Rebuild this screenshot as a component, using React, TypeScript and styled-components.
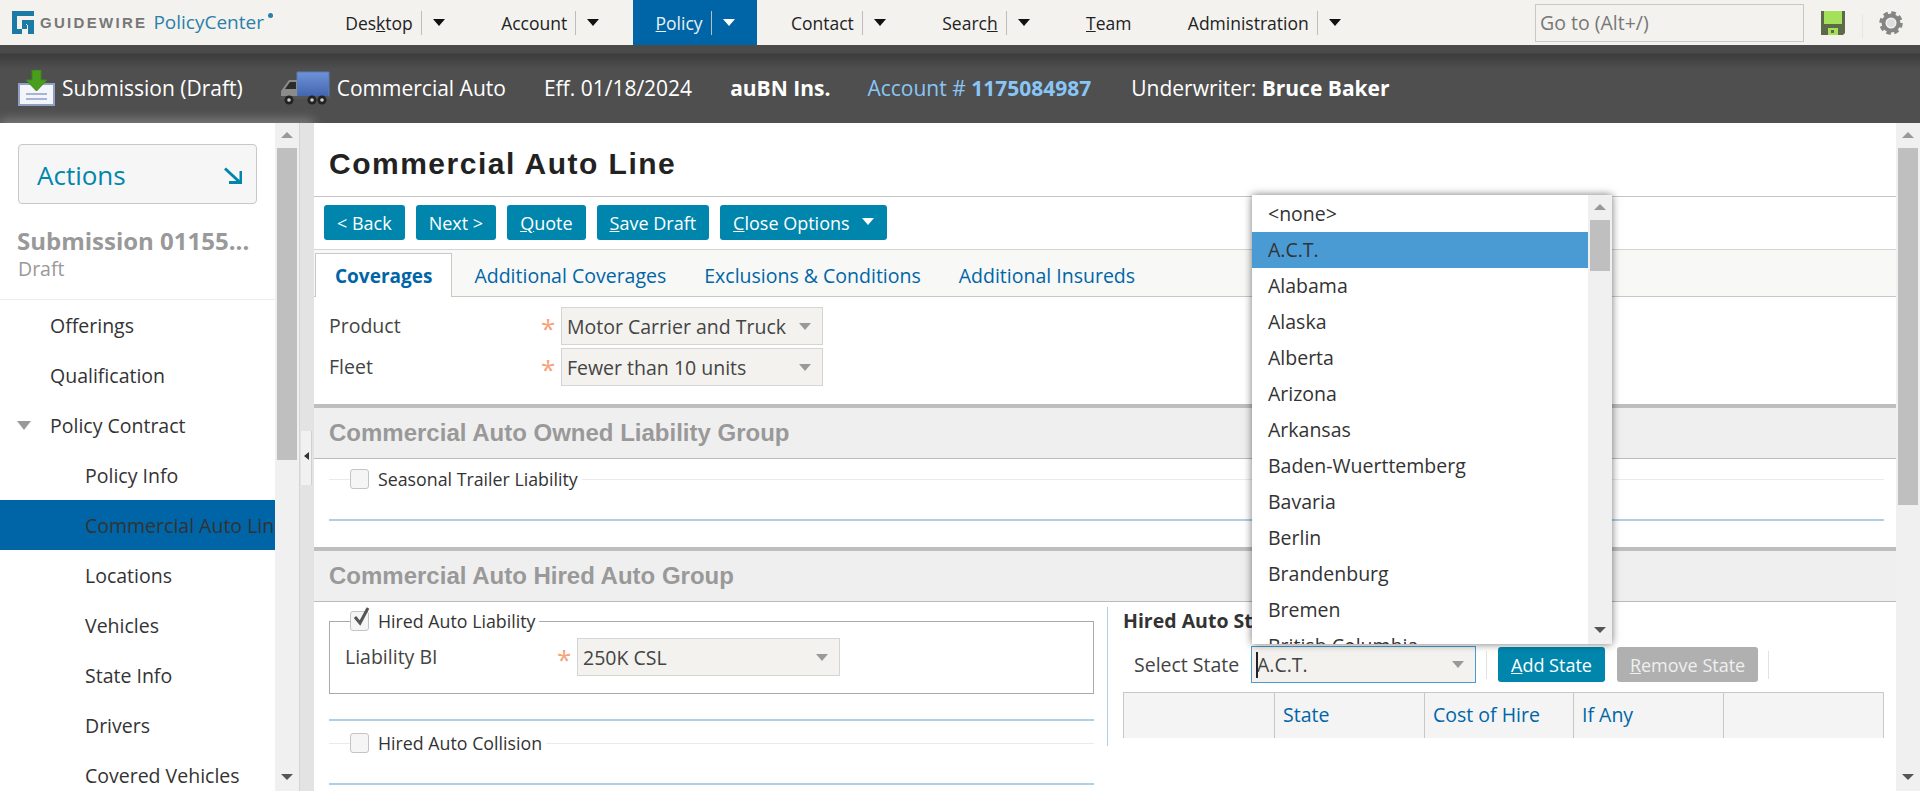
import styled, { createGlobalStyle } from 'styled-components';

const GlobalStyle = createGlobalStyle`
  html, body {
    margin: 0;
    height: 100%;
    overflow: hidden;
    background: #fff;
  }
  body {
    font-family: 'Open Sans', sans-serif;
    color: #333;
  }
  * {
    box-sizing: border-box;
  }
`;

const navItems = [
  { id: 'desktop', label: <>Des<u>k</u>top</>, menu: true },
  { id: 'account', label: <>Account</>, menu: true },
  { id: 'policy', label: <><u>P</u>olicy</>, menu: true, active: true },
  { id: 'contact', label: <>Contact</>, menu: true },
  { id: 'search', label: <>Searc<u>h</u></>, menu: true },
  { id: 'team', label: <><u>T</u>eam</>, menu: false },
  { id: 'admin', label: <>Administration</>, menu: true },
];

const sideItems = [
  { label: 'Offerings', level: 1 },
  { label: 'Qualification', level: 1 },
  { label: 'Policy Contract', level: 1, open: true },
  { label: 'Policy Info', level: 2 },
  { label: 'Commercial Auto Line', level: 2, active: true },
  { label: 'Locations', level: 2 },
  { label: 'Vehicles', level: 2 },
  { label: 'State Info', level: 2 },
  { label: 'Drivers', level: 2 },
  { label: 'Covered Vehicles', level: 2 },
];

const states = [
  '<none>',
  'A.C.T.',
  'Alabama',
  'Alaska',
  'Alberta',
  'Arizona',
  'Arkansas',
  'Baden-Wuerttemberg',
  'Bavaria',
  'Berlin',
  'Brandenburg',
  'Bremen',
  'British Columbia',
];

const Logo = () => (
  <LogoWrap>
    <svg width="22" height="23" viewBox="0 0 22 23">
      <path
        fill="#1b7ba5"
        d="M0 0h22v5H5v13h5V9h12v14h-6v-9h-1v4h-5v5H0zM15 14v-1h-1v1z"
      />
    </svg>
    <LogoWord>GUIDEWIRE</LogoWord>
    <LogoProduct>PolicyCenter</LogoProduct>
    <LogoDot />
  </LogoWrap>
);

const SubmissionIcon = () => (
  <svg width="37" height="36" viewBox="0 0 37 36">
    <path fill="#f3f5fa" stroke="#8f9fc6" strokeWidth="2" d="M1 14h35v21H1z" />
    <path stroke="#8f9fc6" strokeWidth="1.5" d="M8 24h21M8 29h21" />
    <path fill="#4a9d1e" stroke="#3b8a14" d="M14 0h9v10h6L18.500 21 8 10h6z" />
  </svg>
);

const TruckIcon = () => (
  <svg width="50" height="34" viewBox="0 0 50 34">
    <defs>
      <linearGradient id="box" x1="0" y1="0" x2="0" y2="1">
        <stop offset="0" stopColor="#6f93d8" />
        <stop offset="1" stopColor="#3f62ad" />
      </linearGradient>
    </defs>
    <path fill="url(#box)" stroke="#5a7ab8" d="M17 1h32v26H17z" />
    <path fill="#8b8b8b" d="M17 9H9L1 20v7h16z" />
    <path fill="#2b2b2b" d="M10 11h6v7H5z" />
    <path fill="#555" d="M1 25h48v3H1z" />
    <circle cx="9" cy="29" r="4.500" fill="#222" />
    <circle cx="9" cy="29" r="1.800" fill="#ccc" />
    <circle cx="32" cy="29" r="4.500" fill="#222" />
    <circle cx="32" cy="29" r="1.800" fill="#ccc" />
    <circle cx="42" cy="29" r="4.500" fill="#222" />
    <circle cx="42" cy="29" r="1.800" fill="#ccc" />
  </svg>
);

const SaveIcon = () => (
  <svg width="24" height="24" viewBox="0 0 24 24">
    <path fill="#5c6a4a" d="M0 0h24v22l-2 2H0z" />
    <path fill="#a4e05a" d="M3 0h18v13H3z" />
    <path fill="#a4e05a" d="M7 17h10v7H7z" />
    <path fill="#5c6a4a" d="M10 19h3v3h-3z" />
  </svg>
);

const GearIcon = () => (
  <svg width="24" height="24" viewBox="0 0 24 24">
    <circle cx="12" cy="12" r="7.500" fill="none" stroke="#858585" strokeWidth="4" />
    <circle cx="12" cy="12" r="10" fill="none" stroke="#858585" strokeWidth="3.500" strokeDasharray="4.500 3.350" />
    <circle cx="12" cy="12" r="4" fill="#dedede" />
  </svg>
);

const ActionsArrow = () => (
  <svg width="18" height="17" viewBox="0 0 18 17">
    <path fill="none" stroke="#0086ad" strokeWidth="3" d="M1 1.500l14 13M17 4v11.500H5" />
  </svg>
);

const CheckIcon = () => (
  <CheckMark width="20" height="22" viewBox="0 0 20 22">
    <path fill="none" stroke="#555" strokeWidth="3" d="M4 11l5 6L17 2" />
  </CheckMark>
);

const Dropdown = ({ value, width }: { value: string; width: number }) => (
  <SelectBox $width={width}>
    <span>{value}</span>
    <SelectCaret />
  </SelectBox>
);

const Scrollbar = ({ thumbTop, thumbHeight }: { thumbTop: number; thumbHeight: number }) => (
  <ScrollTrack>
    <ArrowUp />
    <ScrollThumb $top={thumbTop} $height={thumbHeight} />
    <ArrowDown />
  </ScrollTrack>
);

const App = () => {
  return (
    <Page>
      <GlobalStyle />
      <TopBar>
        <Logo />
        <Nav>
          {navItems.map((item) => (
            <NavItem key={item.id} $active={item.active}>
              <span>{item.label}</span>
              {item.menu && (
                <>
                  <NavSep />
                  <NavCaret $active={item.active} />
                </>
              )}
            </NavItem>
          ))}
        </Nav>
        <GoTo>Go to (Alt+/)</GoTo>
        <SaveSlot>
          <SaveIcon />
        </SaveSlot>
        <GearSlot>
          <GearIcon />
        </GearSlot>
      </TopBar>

      <InfoBar>
        <InfoIcon $left={18} $gap={7}>
          <SubmissionIcon />
          <span>Submission (Draft)</span>
        </InfoIcon>
        <InfoIcon $left={37} $gap={7}>
          <TruckIcon />
          <span>Commercial Auto</span>
        </InfoIcon>
        <InfoText $left={38}>Eff. 01/18/2024</InfoText>
        <InfoText $left={38}>
          <b>auBN Ins.</b>
        </InfoText>
        <InfoText $left={37} $blue>
          Account # <b>1175084987</b>
        </InfoText>
        <InfoText $left={40}>
          Underwriter: <b>Bruce Baker</b>
        </InfoText>
      </InfoBar>

      <Body>
        <Sidebar>
          <SideContent>
            <ActionsButton>
              <span>Actions</span>
              <ActionsArrow />
            </ActionsButton>
            <SideTitle>Submission 01155...</SideTitle>
            <SideStatus>Draft</SideStatus>
            <SideList>
              {sideItems.map((item) => (
                <SideItem key={item.label} $level={item.level} $active={item.active}>
                  {item.open && <SideCaret />}
                  {item.label}
                </SideItem>
              ))}
            </SideList>
          </SideContent>
          <Scrollbar thumbTop={3} thumbHeight={312} />
          <Splitter>
            <SplitHandle />
          </Splitter>
        </Sidebar>

        <Main>
          <Title>Commercial Auto Line</Title>
          <Toolbar>
            <Button>&lt; Back</Button>
            <Button>Next &gt;</Button>
            <Button>
              <u>Q</u>uote
            </Button>
            <Button>
              <u>S</u>ave Draft
            </Button>
            <Button>
              <u>C</u>lose Options
              <ButtonCaret />
            </Button>
          </Toolbar>
          <Tabs>
            <Tab $active>Coverages</Tab>
            <Tab>Additional Coverages</Tab>
            <Tab>Exclusions &amp; Conditions</Tab>
            <Tab>Additional Insureds</Tab>
          </Tabs>

          <TopForm>
            <FormRow>
              <FieldLabel $width={212}>Product</FieldLabel>
              <Required />
              <Dropdown value="Motor Carrier and Truck" width={262} />
            </FormRow>
            <FormRow>
              <FieldLabel $width={212}>Fleet</FieldLabel>
              <Required />
              <Dropdown value="Fewer than 10 units" width={262} />
            </FormRow>
          </TopForm>

          <SectionHeader>Commercial Auto Owned Liability Group</SectionHeader>
          <SectionBody>
            <OpenGroup>
              <GroupLegend>
                <Checkbox />
                Seasonal Trailer Liability
              </GroupLegend>
            </OpenGroup>
            <BlueRule />
          </SectionBody>

          <SectionHeader>Commercial Auto Hired Auto Group</SectionHeader>
          <HiredBody>
            <HiredLeft>
              <ClosedGroup>
                <GroupLegend>
                  <Checkbox>
                    <CheckIcon />
                  </Checkbox>
                  Hired Auto Liability
                </GroupLegend>
                <ClosedRow>
                  <FieldLabel $width={212}>Liability BI</FieldLabel>
                  <Required />
                  <Dropdown value="250K CSL" width={263} />
                </ClosedRow>
              </ClosedGroup>
              <BlueRule />
              <OpenGroup>
                <GroupLegend>
                  <Checkbox />
                  Hired Auto Collision
                </GroupLegend>
              </OpenGroup>
              <BlueRule />
            </HiredLeft>
            <HiredRight>
              <StateHeading>Hired Auto States</StateHeading>
              <StateTools>
                <StateLabel>Select State</StateLabel>
                <StateSelect>
                  <TextCursor />
                  <span>A.C.T.</span>
                  <SelectCaret />
                </StateSelect>
                <ToolSep />
                <Button>
                  <u>A</u>dd State
                </Button>
                <StateGap />
                <Button $disabled>
                  <u>R</u>emove State
                </Button>
                <ToolSep />
              </StateTools>
              <StateTable>
                <HeadCell />
                <HeadCell>State</HeadCell>
                <HeadCell>Cost of Hire</HeadCell>
                <HeadCell>If Any</HeadCell>
                <HeadCell />
              </StateTable>
            </HiredRight>
          </HiredBody>
        </Main>

        <Scrollbar thumbTop={3} thumbHeight={357} />

        <StatePopup>
          <PopupList>
            {states.map((state, i) => (
              <PopupItem key={state} $selected={i === 1}>
                {state}
              </PopupItem>
            ))}
          </PopupList>
          <Scrollbar thumbTop={3} thumbHeight={51} />
        </StatePopup>
      </Body>
    </Page>
  );
};

const Page = styled.div`
  width: 1920px;
  height: 791px;
  display: flex;
  flex-direction: column;
  overflow: hidden;
`;

const TopBar = styled.header`
  height: 45px;
  flex: none;
  display: flex;
  align-items: stretch;
  background: #f3f2ef;
`;

const LogoWrap = styled.div`
  width: 323px;
  flex: none;
  position: relative;
  display: flex;
  align-items: center;
  padding: 0 0 1px 12px;
`;

const LogoWord = styled.span`
  margin-left: 6px;
  font: bold 15px 'Liberation Sans', sans-serif;
  letter-spacing: 2.300px;
  color: #777;
`;

const LogoProduct = styled.span`
  margin-left: 6px;
  font-size: 19px;
  color: #2a80a9;
`;

const LogoDot = styled.i`
  position: absolute;
  left: 268px;
  top: 13px;
  width: 5px;
  height: 5px;
  border-radius: 50%;
  background: #2a80a9;
`;

const Nav = styled.nav`
  display: flex;
  gap: 12px;
  width: 1024px;
  flex: none;
`;

const NavItem = styled.div<{ $active?: boolean }>`
  display: flex;
  align-items: center;
  padding: 0 22.200px;
  font-size: 17.500px;
  background: ${(p) => (p.$active ? '#0065a6' : 'transparent')};
  color: ${(p) => (p.$active ? '#e9f1f7' : '#222')};
  white-space: nowrap;
`;

const NavSep = styled.i`
  width: 1px;
  height: 24px;
  margin: 0 11px 0 8px;
  background: #bdbdbd;
`;

const NavCaret = styled.i<{ $active?: boolean }>`
  width: 0;
  height: 0;
  border: 6px solid transparent;
  border-bottom: 0;
  border-top: 7px solid ${(p) => (p.$active ? '#fff' : '#111')};
`;

const GoTo = styled.div`
  width: 269px;
  height: 38px;
  flex: none;
  align-self: center;
  margin-left: 188px;
  padding: 0 4px;
  border: 1px solid #c8c8c4;
  font-size: 19.500px;
  line-height: 36px;
  color: #777;
`;

const SaveSlot = styled.div`
  width: 58px;
  flex: none;
  display: flex;
  align-items: center;
  padding-left: 17px;
`;

const GearSlot = styled.div`
  position: relative;
  width: 58px;
  flex: none;
  display: flex;
  align-items: center;
  padding-left: 17px;

  &::before {
    content: '';
    position: absolute;
    left: 0;
    top: 14px;
    width: 1px;
    height: 24px;
    background: #e6e5e2;
  }
`;

const InfoBar = styled.div`
  height: 78px;
  flex: none;
  display: flex;
  align-items: center;
  padding-top: 8px;
  background: linear-gradient(#4a4a4a 0, #4a4a4a 8px, #3c3c3c 9px, #4f4f4f 24px);
  color: #fff;
  font-size: 21px;
  white-space: nowrap;
`;

const InfoIcon = styled.div<{ $left: number; $gap: number }>`
  display: flex;
  align-items: center;
  gap: ${(p) => p.$gap}px;
  margin-left: ${(p) => p.$left}px;
`;

const InfoText = styled.div<{ $left: number; $blue?: boolean }>`
  margin-left: ${(p) => p.$left}px;
  color: ${(p) => (p.$blue ? '#8ac6f5' : '#fff')};
`;

const Body = styled.div`
  position: relative;
  flex: 1;
  min-height: 0;
  display: flex;
`;

const Sidebar = styled.aside`
  width: 314px;
  flex: none;
  display: flex;
  box-shadow: 0 -4px 10px rgba(255, 255, 255, 0.25);
`;

const SideContent = styled.div`
  width: 275px;
  flex: none;
  overflow: hidden;
  padding-top: 21px;
  background: #fff;
`;

const ActionsButton = styled.div`
  width: 239px;
  height: 60px;
  margin-left: 18px;
  padding: 2px 14px 0 18px;
  display: flex;
  align-items: center;
  justify-content: space-between;
  border: 1px solid #c8c8c8;
  border-radius: 4px;
  background: #f6f6f6;
  font-size: 26px;
  color: #0086ad;
`;

const SideTitle = styled.div`
  margin: 22px 0 0 17px;
  font-size: 24px;
  line-height: 30px;
  font-weight: 700;
  color: #999;
  white-space: nowrap;
`;

const SideStatus = styled.div`
  margin-left: 18px;
  padding-top: 1px;
  font-size: 19.500px;
  line-height: 24px;
  color: #999;
`;

const SideList = styled.div`
  margin-top: 18px;
  border-top: 1px solid #ececec;
`;

const SideItem = styled.div<{ $level: number; $active?: boolean }>`
  position: relative;
  height: 50px;
  padding-left: ${(p) => (p.$level === 1 ? 50 : 85)}px;
  font-size: 19.500px;
  line-height: 51px;
  white-space: nowrap;
  overflow: hidden;
  background: ${(p) => (p.$active ? '#0065a6' : 'transparent')};
  color: #333;
`;

const SideCaret = styled.i`
  position: absolute;
  left: 17px;
  top: 21px;
  width: 0;
  height: 0;
  border: 7px solid transparent;
  border-bottom: 0;
  border-top: 9px solid #999;
`;

const ScrollTrack = styled.div`
  position: relative;
  width: 24px;
  flex: none;
  padding: 0 2px;
  background: #f0f0f0;
`;

const ScrollThumb = styled.div<{ $top: number; $height: number }>`
  position: absolute;
  left: 2px;
  right: 2px;
  top: ${(p) => p.$top + 22}px;
  height: ${(p) => p.$height}px;
  background: #bfbfbf;
`;

const ArrowUp = styled.i`
  position: absolute;
  left: 6px;
  top: 9px;
  width: 0;
  height: 0;
  border: 6px solid transparent;
  border-top: 0;
  border-bottom: 6px solid #999;
`;

const ArrowDown = styled.i`
  position: absolute;
  left: 6px;
  bottom: 11px;
  width: 0;
  height: 0;
  border: 6px solid transparent;
  border-bottom: 0;
  border-top: 6px solid #555;
`;

const Splitter = styled.div`
  width: 15px;
  flex: none;
  padding: 308px 0 0 1px;
  background: #e3e3e3;
  border-left: 1px solid #d5d5d5;
`;

const SplitHandle = styled.div`
  width: 11px;
  height: 54px;
  background: #f1f1f1;
  border-right: 1px solid #d0d0d0;
  position: relative;

  &::after {
    content: '';
    position: absolute;
    left: 3px;
    top: 21px;
    border: 4px solid transparent;
    border-left: 0;
    border-right: 5px solid #333;
  }
`;

const Main = styled.main`
  flex: 1;
  min-width: 0;
  overflow: hidden;
  background: #fff;
`;

const Title = styled.h1`
  height: 74px;
  margin: 0;
  padding: 21px 0 0 15px;
  border-bottom: 1px solid #c4c4c4;
  font: bold 30px/40px 'Liberation Sans', sans-serif;
  letter-spacing: 1.500px;
  color: #222;
`;

const Toolbar = styled.div`
  height: 53px;
  display: flex;
  gap: 11px;
  padding: 8px 0 0 10px;
  border-bottom: 1px solid #d4d4d4;
`;

const Button = styled.button<{ $disabled?: boolean }>`
  height: 35px;
  padding: 0 13px;
  display: flex;
  align-items: center;
  border: 0;
  border-radius: 3px;
  background: ${(p) => (p.$disabled ? '#b0b0b0' : '#0086ad')};
  color: ${(p) => (p.$disabled ? '#efefef' : '#fff')};
  font: 18px 'Open Sans', sans-serif;
  white-space: nowrap;
`;

const ButtonCaret = styled.i`
  margin-left: 12px;
  margin-bottom: 3px;
  border: 6px solid transparent;
  border-bottom: 0;
  border-top: 7px solid #fff;
`;

const Tabs = styled.div`
  height: 47px;
  display: flex;
  padding: 3px 0 0 1px;
  background: #f8f8f6;
  border-bottom: 1px solid #c8c8c8;
`;

const Tab = styled.div<{ $active?: boolean }>`
  height: 44px;
  margin-right: ${(p) => (p.$active ? 3 : 0)}px;
  padding: 0 ${(p) => (p.$active ? 19 : 18)}px;
  font-size: ${(p) => (p.$active ? 19 : 19.5)}px;
  line-height: 44px;
  color: #0065a6;
  font-weight: ${(p) => (p.$active ? 700 : 400)};
  background: ${(p) => (p.$active ? '#fff' : 'transparent')};
  border: 1px solid ${(p) => (p.$active ? '#c8c8c8' : 'transparent')};
  border-bottom: 0;
`;

const TopForm = styled.div`
  display: flex;
  flex-direction: column;
  gap: 3px;
  padding: 10px 0 18px 15px;
`;

const FormRow = styled.div`
  display: flex;
  align-items: center;
`;

const FieldLabel = styled.span<{ $width: number }>`
  width: ${(p) => p.$width}px;
  flex: none;
  padding-bottom: 2px;
  font-size: 19.500px;
  color: #444;
`;

const Required = styled.span`
  width: 20px;
  height: 22px;
  flex: none;
  color: #f8a27a;
  font-size: 26px;
  line-height: 27px;

  &::before {
    content: '*';
  }
`;

const SelectBox = styled.div<{ $width: number }>`
  width: ${(p) => p.$width}px;
  height: 38px;
  flex: none;
  display: flex;
  align-items: center;
  justify-content: space-between;
  padding: 0 11px 0 5px;
  border: 1px solid #d4d4d4;
  background: #f3f2ef;
  font-size: 19.500px;
  color: #444;
  white-space: nowrap;
`;

const SelectCaret = styled.i`
  border: 6px solid transparent;
  border-bottom: 0;
  border-top: 7px solid #999;
`;

const SectionHeader = styled.h2`
  height: 55px;
  margin: 0;
  padding: 1px 0 0 15px;
  background: #efefef;
  border-top: 4px solid #bebebe;
  border-bottom: 1px solid #bbb;
  font: bold 24px/48px 'Liberation Sans', sans-serif;
  color: #999;
`;

const SectionBody = styled.div`
  height: 88px;
  padding: 8px 12px 0 15px;
`;

const GroupLegend = styled.legend`
  margin-left: 21px;
  padding: 0 4px 0 0;
  display: flex;
  align-items: center;
  gap: 9px;
  font-size: 17.800px;
  line-height: 24px;
  color: #333;
`;

const OpenGroup = styled.fieldset`
  height: 52px;
  margin: 0;
  padding: 0;
  border: 0;
  border-top: 1px solid #eaeaea;
`;

const ClosedGroup = styled.fieldset`
  height: 85px;
  margin: 0;
  padding: 0;
  border: 1px solid #aaa;

  & > ${GroupLegend} {
    margin-left: 20px;
  }
`;

const ClosedRow = styled(FormRow)`
  margin-top: 5px;
  padding-left: 15px;
`;

const Checkbox = styled.span`
  position: relative;
  width: 19px;
  height: 20px;
  flex: none;
  border: 1px solid #c4c4c4;
  border-radius: 3px;
  background: #f5f5f5;
`;

const CheckMark = styled.svg`
  position: absolute;
  left: 0;
  top: -6px;
`;

const BlueRule = styled.div`
  height: 2px;
  background: #b0cfe5;
`;

const HiredBody = styled.div`
  display: flex;
  padding: 5px 12px 0 15px;
`;

const HiredLeft = styled.div`
  width: 765px;
  flex: none;
  padding-top: 2px;

  & > ${ClosedGroup} {
    margin-bottom: 25px;
  }
  & > ${OpenGroup} {
    margin-top: 10px;
  }
`;

const HiredRight = styled.div`
  flex: 1;
  min-width: 0;
  height: 139px;
  margin-left: 13px;
  padding-left: 15px;
  border-left: 1px solid #b0cfe5;
`;

const StateHeading = styled.div`
  font-size: 19.500px;
  line-height: 28px;
  font-weight: 700;
  color: #333;
`;

const StateTools = styled.div`
  display: flex;
  align-items: center;
  margin-top: 11px;
`;

const StateLabel = styled.span`
  width: 128px;
  flex: none;
  padding-left: 11px;
  font-size: 19.500px;
  color: #444;
`;

const StateSelect = styled.div`
  position: relative;
  width: 225px;
  height: 37px;
  flex: none;
  display: flex;
  align-items: center;
  justify-content: space-between;
  padding: 0 11px 0 5px;
  border: 1px solid #4a9bd4;
  background: #f3f2ef;
  font-size: 19.500px;
  color: #444;
`;

const TextCursor = styled.i`
  position: absolute;
  left: 4px;
  top: 5px;
  width: 2px;
  height: 26px;
  background: #222;
`;

const ToolSep = styled.i`
  width: 1px;
  height: 28px;
  margin: 0 11px 0 10px;
  background: #e2e2e2;
`;

const StateGap = styled.i`
  width: 12px;
  flex: none;
`;

const StateTable = styled.div`
  height: 46px;
  margin-top: 9px;
  display: grid;
  grid-template-columns: 150px 150px 149px 150px 1fr;
  border: 1px solid #c8c8c8;
  border-bottom: 0;
  background: #f4f4f4;
`;

const HeadCell = styled.div`
  padding-left: 8px;
  border-left: 1px solid #c8c8c8;
  font-size: 19.500px;
  line-height: 44px;
  color: #0065a6;

  &:first-child {
    border-left: 0;
  }
`;

const StatePopup = styled.div`
  position: absolute;
  left: 1252px;
  top: 72px;
  width: 360px;
  height: 449px;
  display: flex;
  background: #fff;
  box-shadow: 0 0 8px rgba(0, 0, 0, 0.55);
`;

const PopupList = styled.div`
  flex: 1;
  min-width: 0;
  overflow: hidden;
  padding-top: 1px;
`;

const PopupItem = styled.div<{ $selected?: boolean }>`
  height: 36px;
  padding-left: 16px;
  font-size: 19.500px;
  line-height: 36px;
  color: #333;
  background: ${(p) => (p.$selected ? '#4a9bd4' : 'transparent')};
`;

export default App;
